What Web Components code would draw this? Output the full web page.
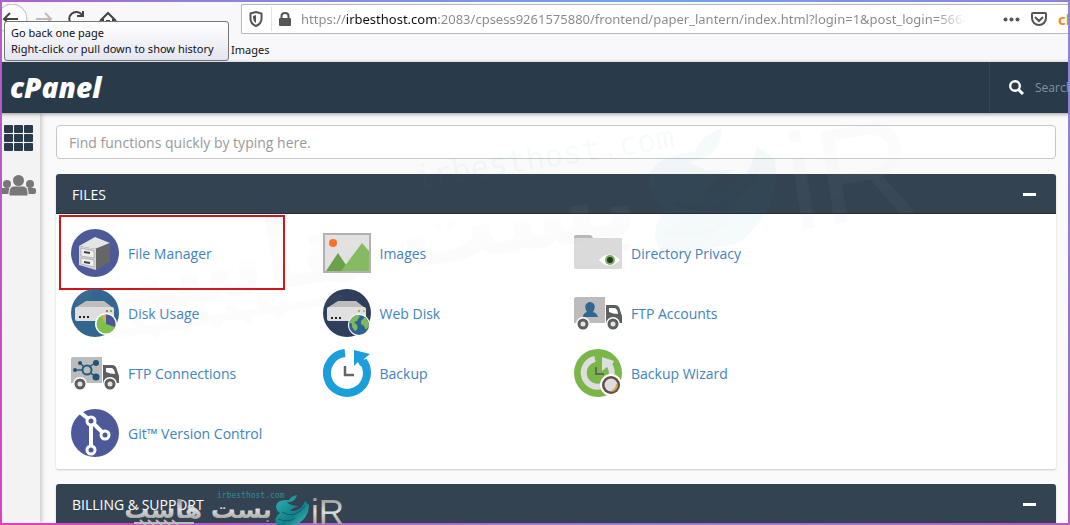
<!DOCTYPE html>
<html lang="en">
<head>
<meta charset="utf-8">
<meta name="viewport" content="width=device-width, initial-scale=1">
<title>cPanel</title>
<style>
    html, body { height: 100%; }
    body {
        --navy: #293a4a;
        --panel: #344352;
        --link: #4084be;
        margin: 0;
        overflow: hidden;
        background: #fafafb;
        font-family: "Open Sans", "Noto Sans", sans-serif;
        font-size: 14px;
        color: #333;
    }
</style>
</head>
<body>
<cp-app></cp-app>
<script>
const icons = {
    file: `<circle cx="24" cy="24" r="24" fill="#4d5a9a"/>
        <path d="M8 17L24 8l15 6-15 6z" fill="#e4e4e4"/><path d="M8 17l17 3v21L8 36z" fill="#d4d4d4"/>
        <path d="M25 20l14-6v19l-14 8z" fill="#666"/>
        <path d="M10 19l13 3v7l-13-2zM10 29l13 2v7l-13-3z" fill="#f0f0f0" stroke="#999" stroke-width=".6"/>
        <path d="M13 23l6 1M13 33l6 1" stroke="#444" stroke-width="2"/>`,
    images: `<path d="M0 4h48v40H0z" fill="#b1b1b1"/><path d="M2 6h44v36H2z" fill="#e2e2e2"/>
        <circle cx="10" cy="14" r="4" fill="#ff6b1a"/>
        <path d="M3 42l12-18 12 18z" fill="#68a044"/><path d="M18 42l21-28 7 8v20z" fill="#84bb60"/>`,
    folder: `<path d="M0 10V8q0-2 2-2h14q2 0 3 3h27q2 0 2 2v4H0z" fill="#b8b8b8"/>
        <path d="M0 9h46q2 0 2 2v27q0 2-2 2H2q-2 0-2-2z" fill="#dadada"/>
        <path d="M25 31q10-11 21 0-11 11-21 0" fill="#fff"/><circle cx="36" cy="31" r="5" fill="#80b15f"/><circle cx="36" cy="31" r="3" fill="#243b24"/>`,
    disk: `<circle cx="24" cy="24" r="24" fill="#32658f"/>
        <path d="M4 19l11-7h18l9 7z" fill="#bdbdbd"/><rect x="4" y="18" width="39" height="14" rx="2" fill="#e0e0e0"/>
        <path d="M8 27h2v2H8zm4 0h2v2h-2zm4 0h2v2h-2z" fill="#222"/>
        <circle cx="36" cy="22" r="1" fill="#c33"/><circle cx="40" cy="22" r="1" fill="#3a3"/>
        <circle cx="35" cy="35" r="11" fill="#fff"/><circle cx="35" cy="35" r="9.500" fill="#7fc04c"/>
        <path d="M35 35v-9.500a9.500 9.500 0 0 1 9 12.500z" fill="#4c5697"/><path d="M35 35v-9.500a9.500 9.500 0 0 0-5 1.500z" fill="#d3b34c"/>`,
    webdisk: `<circle cx="24" cy="24" r="24" fill="#2e3e5c"/>
        <path d="M4 19l11-7h18l9 7z" fill="#bdbdbd"/><rect x="4" y="18" width="39" height="14" rx="2" fill="#e0e0e0"/>
        <path d="M8 28h2v2H8zm4 0h2v2h-2zm4 0h2v2h-2z" fill="#222"/>
        <circle cx="36" cy="22" r="1" fill="#a84"/><circle cx="41" cy="22" r="1" fill="#c93"/>
        <circle cx="36" cy="36" r="11" fill="#fff"/><circle cx="36" cy="36" r="10" fill="#2b6193"/>
        <path d="M28 30q5-6 9-3l-3 5-3 1 3 3q2 4-2 6-4-4-3-7l-3-2zM38 32l4-4q4 4 4 9l-3 4-2-4-3-2z" fill="#7fb75b"/>`,
    account: `<path d="M0 5q0-2 2-2h29v26H0z" fill="#bcbcbc"/>
        <path d="M9 23q0-4 4-5-3-5-1-8 4-4 8 0 2 3-1 8 4 1 5 5z" fill="#32658f"/>`,
    connections: `<path d="M0 5q0-2 2-2h29v26H0z" fill="#bcbcbc"/>
        <path d="M5 16h7m1-3L9 9m9 4l6-4m-5 10l6 3" stroke="#275c80" stroke-width="1.500"/>
        <circle cx="16" cy="16" r="4.500" fill="none" stroke="#275c80" stroke-width="2"/>
        <g fill="#1f5578"><circle cx="4" cy="16" r="2"/><circle cx="9" cy="9" r="2"/><circle cx="25" cy="9" r="3"/><circle cx="25" cy="23" r="3.500"/></g>`,
    truck: `<path d="M32 11h9q4 0 5 5l2 6v7H32z" fill="#5c5e60"/><path d="M35 14h6q3 2 3 6-5 0-9-2z" fill="#fff"/>
        <circle cx="9" cy="30" r="7" fill="#fff"/><circle cx="39" cy="30" r="7" fill="#fff"/>
        <circle cx="9" cy="30" r="4" fill="#e5e5e5" stroke="#5c5e60" stroke-width="3"/><circle cx="39" cy="30" r="4" fill="#e5e5e5" stroke="#5c5e60" stroke-width="3"/>`,
    backup: `<path d="M22 4A20 20 0 1 0 40 12" fill="none" stroke="#1a9fdc" stroke-width="8"/>
        <path d="M31 1l16 4-6 5 3 5-7 2-2-4-4 4z" fill="#1a9fdc"/><path d="M22 17v9h9" fill="none" stroke="#666" stroke-width="2.500"/>`,
    wizard: `<circle cx="24" cy="24" r="24" fill="#7ab648"/>
        <path d="M21 10a14 14 0 1 0 15 7" fill="none" stroke="#dedede" stroke-width="6"/><path d="M28 8l12 4-4 8-3-2-5 4z" fill="#dedede"/>
        <path d="M22 18v7h8" fill="none" stroke="#666" stroke-width="2"/>
        <circle cx="37" cy="36" r="11" fill="#fff"/><circle cx="37" cy="36" r="9" fill="#5f5048"/><circle cx="37" cy="36" r="6.500" fill="#dedede"/>
        <path d="M38 42q5-1 5-7" fill="none" stroke="#c9a34b" stroke-width="2"/>`,
    git: `<circle cx="24" cy="24" r="24" fill="#4d5a9a"/><path d="M10 4l10 8v28m0-28l14 14" fill="none" stroke="#fff" stroke-width="4"/>
        <g fill="#4d5a9a" stroke="#fff" stroke-width="3"><circle cx="20" cy="12" r="4"/><circle cx="34" cy="26" r="4"/><circle cx="20" cy="41" r="4"/></g>`
};
icons.ftp = `<g transform="translate(0 5)">${icons.account}${icons.truck}</g>`;
icons.ftpconn = `<g transform="translate(0 5)">${icons.connections}${icons.truck}</g>`;

class BaseElement extends HTMLElement {
    constructor() {
        super();
        this.attachShadow({ mode: 'open' });
    }

    connectedCallback() {
        this.shadowRoot.innerHTML = `<style>* { box-sizing: border-box; }</style>` + this.render();
    }
}

class BrowserBar extends BaseElement {
    render() {
        return `
            <style>
                :host { display: block; position: relative; height: 62px; padding-top: 4px; background: #f8f8fa; }
                .row { display: flex; align-items: center; }
                nav { display: flex; flex: 0 0 241px; height: 30px; }
                button { border: 0; padding: 0; background: none; width: 32px; height: 30px; flex: none; }
                nav svg, .url svg { display: block; }
                .url {
                    flex: 1; min-width: 0; display: flex; align-items: center; height: 30px; overflow: hidden;
                    background: #fff; border: 1px solid #b8b8bc; border-right: 0; border-radius: 2px 0 0 2px;
                }
                .shield { width: 30px; border-right: 1px solid #e2e2e2; padding-left: 7px; height: 24px; display: flex; align-items: center; }
                .lock { width: 29px; padding-left: 6px; }
                input {
                    flex: 1; min-width: 0; height: 28px; padding: 0; border: 0; outline: 0;
                    font: 13px/28px "Noto Sans", sans-serif; color: #777;
                    -webkit-text-fill-color: transparent;
                    background: linear-gradient(90deg, #888 45px, #111 45px 136px, #888 136px calc(100% - 44px), #fff calc(100% - 14px));
                    -webkit-background-clip: text; background-clip: text;
                }
                .actions { display: flex; flex: 0 0 90px; gap: 11px; align-items: center; padding-left: 23px; overflow: hidden; }
                .actions svg, .actions span { flex: none; }
                .actions span { font: bold 15px "Open Sans", sans-serif; color: #f08a24; }
                .bookmarks { padding: 6px 0 0 231px; font: 11px/20px "Noto Sans", sans-serif; color: #111; }
                .tip {
                    position: absolute; left: 4px; top: 21px; min-width: 225px; padding: 3px 6px; z-index: 2;
                    border: 1px solid #767676; border-radius: 3px; background: linear-gradient(#fff, #e4e5f0);
                    font: 11px/16px "Noto Sans", sans-serif; color: #111; white-space: nowrap;
                }
            </style>
            <div class="row">
                <nav>
                    <button aria-label="Back"><svg width="32" height="34" viewBox="0 0 32 34" fill="none"><circle cx="12" cy="15" r="15" fill="#fff" stroke="#bbb"/><path d="M18 15H4m6-6l-6 6 6 6" stroke="#444" stroke-width="2"/></svg></button>
                    <button aria-label="Forward"><svg width="32" height="30" viewBox="0 0 32 30" fill="none" stroke="#bbb" stroke-width="2"><path d="M4 15h15m-6-6l6 6-6 6"/></svg></button>
                    <button aria-label="Reload"><svg width="32" height="30" viewBox="0 0 32 30" fill="none" stroke="#444" stroke-width="2"><path d="M18 19a7 7 0 1 1 0-8m1-4v5h-6"/></svg></button>
                    <button aria-label="Home"><svg width="32" height="30" viewBox="0 0 32 30" fill="none" stroke="#444" stroke-width="2"><path d="M4 17l8-8 8 8M7 15v8h10v-8M11 23v-6h3"/></svg></button>
                </nav>
                <div class="url">
                    <div class="shield"><svg width="14" height="16" viewBox="0 0 14 16"><path d="M1.500 2.500L7 1l5.500 1.500V8q0 4.500-5.500 7-5.500-2.500-5.500-7z" fill="none" stroke="#555" stroke-width="2"/><path d="M7 4v8Q4 10 4 7V5z" fill="#555"/></svg></div>
                    <div class="lock"><svg width="14" height="16" viewBox="0 0 14 16"><path d="M3.500 8V5q0-3 3.500-3t3.500 3v3" fill="none" stroke="#555" stroke-width="2"/><rect x="1" y="7" width="12" height="8" rx="1" fill="#555"/></svg></div>
                    <input type="text" aria-label="Address" value="https://irbesthost.com:2083/cpsess9261575880/frontend/paper_lantern/index.html?login=1&amp;post_login=5664">
                    <div class="actions">
                        <svg width="17" height="5" viewBox="0 0 17 5" fill="#555"><circle cx="2.500" cy="2.500" r="2"/><circle cx="8.500" cy="2.500" r="2"/><circle cx="14.500" cy="2.500" r="2"/></svg>
                        <svg width="16" height="14" viewBox="0 0 16 14" fill="none" stroke="#555" stroke-width="2"><path d="M1 2q0-1 1-1h12q1 0 1 1v4a7 7 0 0 1-14 0zM4 5l4 4 4-4"/></svg>
                        <span>cl</span>
                    </div>
                </div>
            </div>
            <div class="bookmarks">Images</div>
            <div class="tip" role="tooltip">Go back one page<br>Right-click or pull down to show history</div>
        `;
    }
}

class CpHeader extends BaseElement {
    render() {
        return `
            <style>
                :host {
                    display: flex; justify-content: space-between; height: 51px; position: relative;
                    background: var(--navy); box-shadow: 0 1px 4px rgba(0,0,0,.4);
                }
                .logo { padding-left: 10px; font: italic 800 28px/50px "Open Sans", sans-serif; color: #fff; text-decoration: none; }
                label {
                    display: flex; align-items: center; gap: 11px; flex: 0 0 81px; min-width: 0; overflow: hidden;
                    padding-left: 19px; border-left: 1px solid #34475a;
                }
                svg { flex: none; }
                input { width: 120px; flex: none; border: 0; padding: 0; background: none; font: 12px "Open Sans", sans-serif; color: #fff; }
                input::placeholder { color: #87919b; opacity: 1; }
            </style>
            <a class="logo" href="#">cPanel</a>
            <label>
                <svg width="15" height="15" viewBox="0 0 15 15" fill="none" stroke="#fff"><circle cx="6" cy="6" r="4.800" stroke-width="2.400"/><path d="M9.500 9.500l4.500 4.500" stroke-width="3"/></svg>
                <input type="text" placeholder="Search" aria-label="Search">
            </label>
        `;
    }
}

class SideNav extends BaseElement {
    render() {
        return `
            <style>
                :host {
                    display: flex; flex-direction: column; gap: 24px; padding: 12px 0 0 2px;
                    background: #f3f3f3; box-shadow: 1px 0 5px rgba(0,0,0,.25);
                }
                a, svg { display: block; }
            </style>
            <a href="#" aria-label="Home"><svg width="34" height="26" viewBox="0 0 34 26" fill="#293a4a">
                ${[0, 9, 18].map(y => [2, 12, 22].map(x => `<rect x="${x}" y="${y}" width="9" height="8" rx="1"/>`).join('')).join('')}
            </svg></a>
            <a href="#" aria-label="User manager"><svg width="34" height="26" viewBox="0 0 34 26" fill="#777">
                <circle cx="5" cy="9" r="4"/><circle cx="28" cy="9" r="4"/><rect x="-2" y="13" width="12" height="6" rx="2"/><rect x="24" y="13" width="10" height="6" rx="2"/>
                <path d="M7 21v-4q0-5 4-6h11q4 1 4 6v4z" stroke="#f3f3f3"/><circle cx="16.500" cy="5.500" r="5.500"/>
            </svg></a>
        `;
    }
}

class FeaturePanel extends BaseElement {
    render() {
        return `
            <style>
                :host { display: block; border-radius: 4px 4px 2px 2px; background: #fff; box-shadow: 0 1px 2px rgba(0,0,0,.2); }
                header {
                    display: flex; align-items: center; justify-content: space-between; height: 40px; padding: 1px 20px 0 16px;
                    box-shadow: inset 0 -1px #222d38; border-radius: 3px 3px 0 0; background: var(--panel); color: #fff;
                }
                h2 { margin: 0; font-size: 14px; font-weight: 400; }
                button { width: 13px; height: 3px; padding: 0; border: 0; background: #fff; }
                .body {
                    display: grid; grid-template-columns: repeat(4, 1fr); gap: 12px 36px; padding: 15px 15px 12px;
                    min-height: 48px;
                }
            </style>
            <header><h2>${this.getAttribute('heading')}</h2><button aria-label="Collapse"></button></header>
            <div class="body"><slot></slot></div>
        `;
    }
}

class FeatureLink extends BaseElement {
    render() {
        return `
            <style>
                :host { display: block; position: relative; }
                a { display: flex; align-items: center; gap: 9px; color: var(--link); text-decoration: none; white-space: nowrap; }
                svg { flex: none; }
                :host([marked])::after {
                    content: ""; position: absolute; left: -12px; right: 2px; top: -14px; bottom: -13px; border: 2px solid #d01418;
                }
            </style>
            <a href="#"><svg width="48" height="48" viewBox="0 0 48 48">${icons[this.getAttribute('icon')]}</svg><slot></slot></a>
        `;
    }
}

class HostLogo extends BaseElement {
    render() {
        return `
            <style>
                :host { display: block; pointer-events: none; }
                svg { display: block; width: 100%; overflow: visible; }
            </style>
            <svg viewBox="0 0 218 35">
                <defs>
                    <linearGradient id="steel" x2="0" y2="1"><stop stop-color="#777"/><stop offset=".5" stop-color="#ddd"/><stop offset="1" stop-color="#888"/></linearGradient>
                    <linearGradient id="teal" x2="1" y2="1"><stop stop-color="#2bb5b8"/><stop offset=".6" stop-color="#137f88"/><stop offset="1" stop-color="#38c4c4"/></linearGradient>
                </defs>
                <text x="91" y="8" font-family="DejaVu Sans Mono" font-size="8" fill="#2e8d9b">irbesthost.com</text>
                <text x="146" y="28" direction="rtl" font-family="DejaVu Sans" font-weight="bold" font-size="25" fill="url(#steel)">بست هاست</text>
                <path d="M8 33h60M14 30l6 5M22 30l6 5M30 30l6 5M38 30l6 5M46 30l6 5" stroke="#bbb" stroke-width="2"/>
                <path d="M171 5q-6 1-8 5-12-1-13 6 0 5 4 7-7 5-3 12h19q13-7 13-20l-4-4q-4 11-15 10 3-4 9-5-9 0-12-4 8 1 10-7z" fill="url(#teal)"/>
                <path d="M156 22q12 8 23-6M152 29q11 4 17-1" fill="none" stroke="#0e5f69"/>
                <text x="185" y="34" font-family="Liberation Sans" font-size="35" fill="url(#steel)">iR</text>
            </svg>
        `;
    }
}

class CpApp extends BaseElement {
    render() {
        return `
            <style>
                :host { display: flex; flex-direction: column; height: 100%; position: relative; overflow: hidden; }
                .content { flex: 1; min-height: 0; display: flex; }
                side-nav { flex: 0 0 40px; }
                main { flex: 1; min-width: 0; display: flex; flex-direction: column; gap: 15px; padding: 12px 14px 0 16px; }
                main > * { flex: none; }
                .find {
                    height: 34px; padding: 0 12px; border: 1px solid #c5c9cc; border-radius: 4px; background: #fff;
                    font: 14px "Open Sans", sans-serif; color: #333;
                }
                .find::placeholder { color: #999; opacity: 1; }
                cp-header { z-index: 1; }
                .watermark { position: absolute; left: 61px; top: 213px; width: 850px; transform: rotate(-9deg); transform-origin: 0 0; opacity: .04; }
                .stamp { position: absolute; left: 126px; bottom: 0; width: 218px; z-index: 4; }
                .frame {
                    position: absolute; inset: 0; z-index: 3; pointer-events: none; border: 2px solid;
                    border-image: radial-gradient(circle at 60% 0, #6ea6e8, #9080d8 55%, #b45cc8 78%, #e040c0) 2;
                }
            </style>
            <browser-bar></browser-bar>
            <cp-header></cp-header>
            <div class="content">
                <side-nav></side-nav>
                <main>
                    <input class="find" type="text" placeholder="Find functions quickly by typing here." aria-label="Find functions">
                    <feature-panel heading="FILES">
                        <feature-link icon="file" marked>File Manager</feature-link>
                        <feature-link icon="images">Images</feature-link>
                        <feature-link icon="folder">Directory Privacy</feature-link>
                        <span></span>
                        <feature-link icon="disk">Disk Usage</feature-link>
                        <feature-link icon="webdisk">Web Disk</feature-link>
                        <feature-link icon="ftp">FTP Accounts</feature-link>
                        <span></span>
                        <feature-link icon="ftpconn">FTP Connections</feature-link>
                        <feature-link icon="backup">Backup</feature-link>
                        <feature-link icon="wizard">Backup Wizard</feature-link>
                        <span></span>
                        <feature-link icon="git">Git™ Version Control</feature-link>
                    </feature-panel>
                    <feature-panel heading="BILLING &amp; SUPPORT"></feature-panel>
                </main>
            </div>
            <host-logo class="watermark" aria-hidden="true"></host-logo>
            <host-logo class="stamp"></host-logo>
            <div class="frame"></div>
        `;
    }
}

customElements.define('browser-bar', BrowserBar);
customElements.define('cp-header', CpHeader);
customElements.define('side-nav', SideNav);
customElements.define('feature-link', FeatureLink);
customElements.define('feature-panel', FeaturePanel);
customElements.define('host-logo', HostLogo);
customElements.define('cp-app', CpApp);
</script>
</body>
</html>
